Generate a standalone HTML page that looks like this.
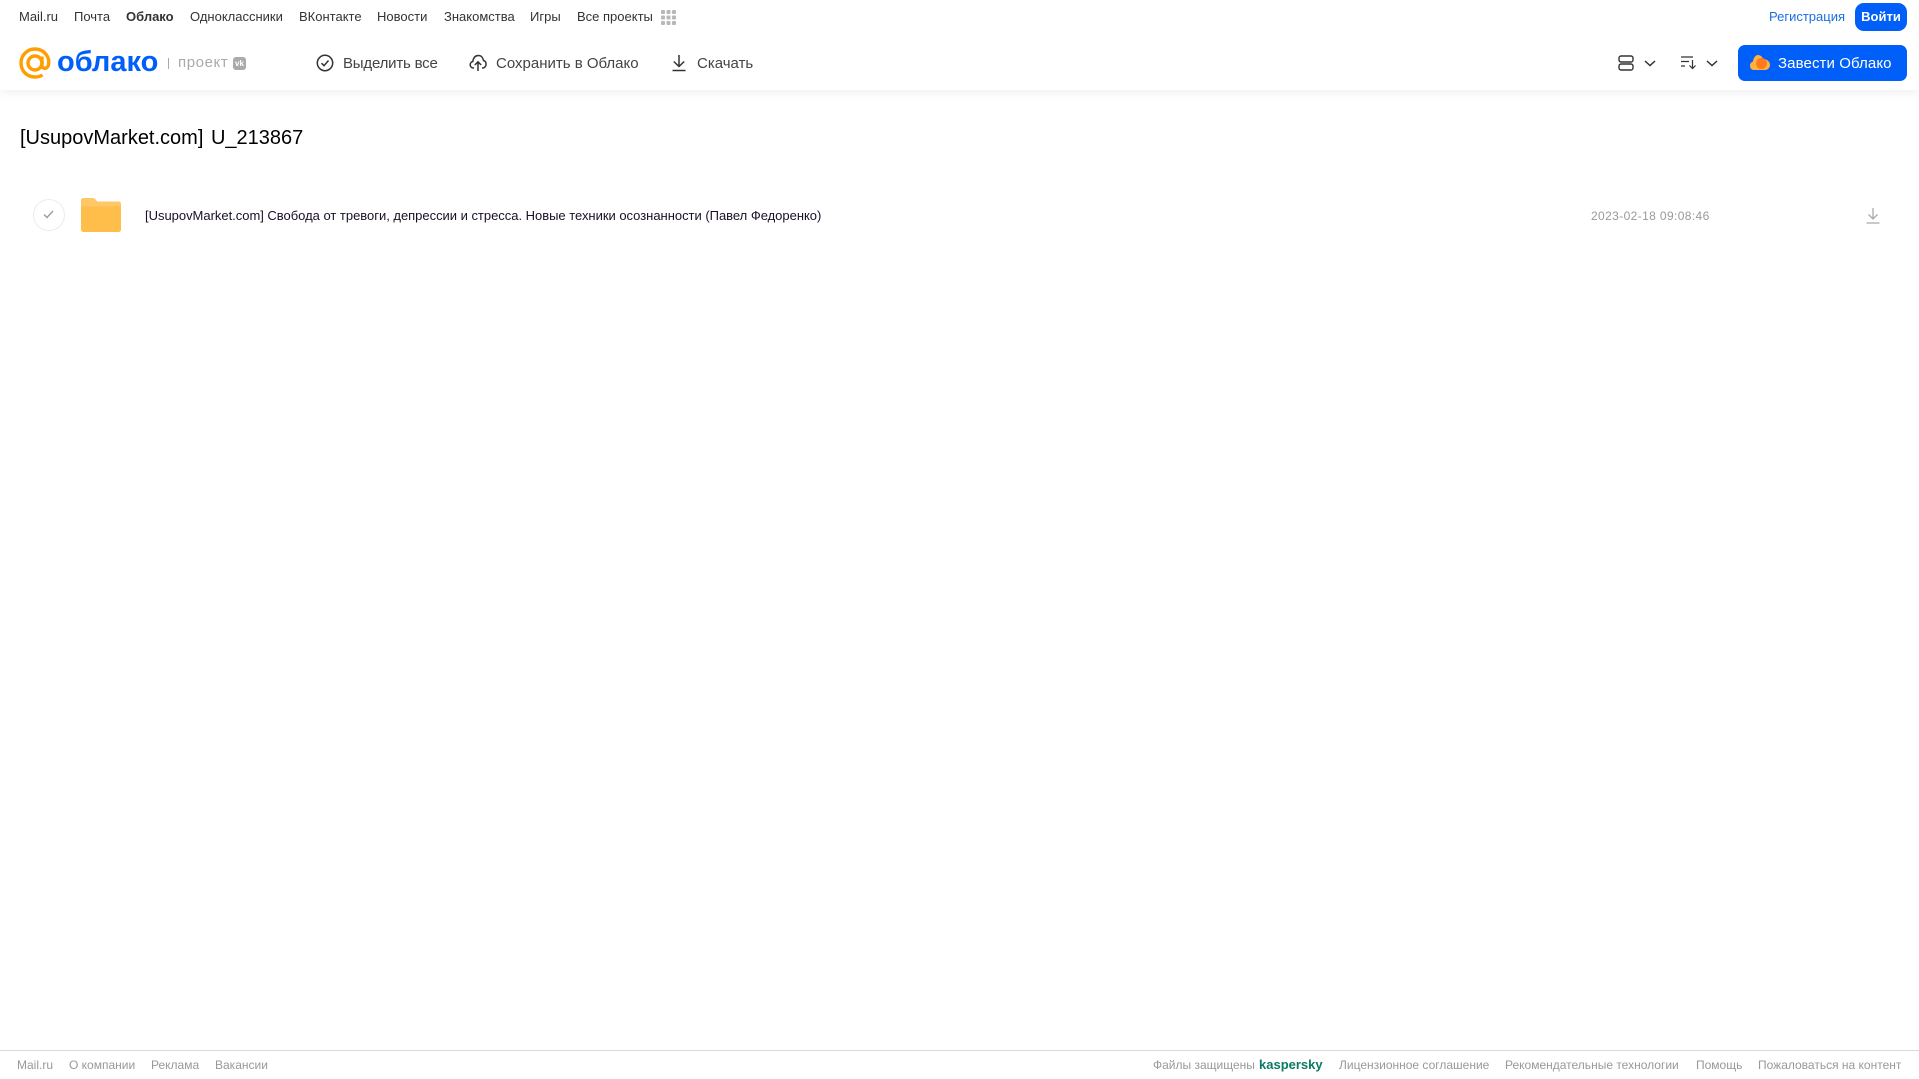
<!DOCTYPE html>
<html lang="ru"><head><meta charset="utf-8"><title>Облако</title>
<style>
html,body{margin:0;padding:0;background:#fff}
body{width:1919px;height:1079px;position:relative;overflow:hidden;font-family:"Liberation Sans",Arial,sans-serif;}
.t{position:absolute;white-space:nowrap;line-height:20px}
.n{top:7px;font-size:13px;color:#333}
.b{top:54px;font-size:15px;color:#444}
.f{top:1055px;font-size:12px;color:#999;line-height:20px}
svg{position:absolute;overflow:visible}
</style></head><body>
<div style="position:absolute;left:0;top:0;width:1919px;height:90px;background:#fff;box-shadow:0 2px 10px rgba(0,0,0,.07)"></div>

<span class="t n" style="left:19px">Mail.ru</span>
<span class="t n" style="left:74px">Почта</span>
<span class="t n" style="left:126px;font-weight:bold">Облако</span>
<span class="t n" style="left:190px">Одноклассники</span>
<span class="t n" style="left:299px">ВКонтакте</span>
<span class="t n" style="left:377px">Новости</span>
<span class="t n" style="left:444px">Знакомства</span>
<span class="t n" style="left:530px">Игры</span>
<span class="t n" style="left:577px">Все проекты</span>
<svg style="left:661px;top:10px" width="15" height="15" fill="#b8b8b8"><rect width="4" height="4" rx="1"/><rect x="5.500" width="4" height="4" rx="1"/><rect x="11" width="4" height="4" rx="1"/><rect y="5.500" width="4" height="4" rx="1"/><rect x="5.500" y="5.500" width="4" height="4" rx="1"/><rect x="11" y="5.500" width="4" height="4" rx="1"/><rect y="11" width="4" height="4" rx="1"/><rect x="5.500" y="11" width="4" height="4" rx="1"/><rect x="11" y="11" width="4" height="4" rx="1"/></svg>

<span class="t" style="left:1769px;top:7px;font-size:13px;color:#1a6fe0">Регистрация</span>
<div class="t" style="left:1855px;top:3px;width:52px;height:28px;line-height:27px;background:#005ff9;border-radius:9px;color:#fff;font-size:13px;font-weight:bold;text-align:center">Войти</div>

<svg style="left:19px;top:47px" width="32" height="32" viewBox="0 0 32 32" fill="none" stroke="#ff9e00" stroke-width="3.400"><circle cx="16" cy="16" r="7"/><path d="M23 9.500V18.500C23 22 28 22.500 29.300 18.500C31.500 10 25 2 16 2C8 2 2 8.500 2 16C2 24 8 30 16 30C19 30 21.500 29.300 23.500 28"/></svg>
<span class="t" style="left:57px;top:47px;font-size:29px;line-height:30px;color:#005ff9;font-weight:bold">облако</span>
<div style="position:absolute;left:168px;top:58px;width:1px;height:11px;background:#aaa"></div>
<span class="t" style="left:178px;top:53px;font-size:15px;color:#aaa;letter-spacing:.6px">проект</span>
<div style="position:absolute;left:233px;top:57px;width:13px;height:13px;background:#aaa;border-radius:3px;color:#fff;font-size:8px;font-weight:bold;line-height:13px;text-align:center">vk</div>

<svg style="left:316px;top:54px" width="18" height="18" fill="none" stroke="#333" stroke-width="1.500"><circle cx="9" cy="9" r="7.700"/><path d="M5.500 9.200L8 11.700L12.500 6.500"/></svg>
<span class="t b" style="left:343px;letter-spacing:-.2px">Выделить все</span>
<svg style="left:469px;top:54px" width="18" height="18" fill="none" stroke="#333" stroke-width="1.500"><path d="M5 14H4.500C0.500 14 0 8.500 3.800 7.500C4.500 3 7 1.500 9.500 1.500C12 1.500 14 3.500 14.500 6.500C18 7.500 18 13 14 14H13"/><path d="M9 17V8M5.800 11L9 7.800L12.200 11"/></svg>
<span class="t b" style="left:496px">Сохранить в Облако</span>
<svg style="left:672px;top:54px" width="14" height="18" fill="none" stroke="#333" stroke-width="1.500"><path d="M7 1V12M1.800 7.500L7 12.500L12.200 7.500M0.500 16.500H13.500"/></svg>
<span class="t b" style="left:697px">Скачать</span>

<svg style="left:1618px;top:55px" width="16" height="16" fill="none" stroke="#333" stroke-width="1.400"><rect x="1" y="1" width="14" height="6" rx="2"/><rect x="1" y="9" width="14" height="6" rx="2"/></svg>
<svg style="left:1644px;top:60px" width="12" height="7" fill="none" stroke="#333" stroke-width="1.500"><path d="M1 1L6 5.500L11 1"/></svg>
<svg style="left:1681px;top:56px" width="16" height="14" fill="none" stroke="#333" stroke-width="1.200"><path d="M0 1H12M0 5.500H8M0 10H4M11.500 4V12.500M8.500 9.500L11.500 12.500L14.500 9.500"/></svg>
<svg style="left:1706px;top:60px" width="12" height="7" fill="none" stroke="#333" stroke-width="1.500"><path d="M1 1L6 5.500L11 1"/></svg>

<div style="position:absolute;left:1738px;top:45px;width:169px;height:36px;background:#005ff9;border-radius:7px"></div>
<svg style="left:1750px;top:54px" width="20" height="17" viewBox="0 0 20 17"><path d="M4 16C1 16 0 13.500 0 11.500C0 9.500 1.500 8 3 7.500C3.500 3 6 1 8 1C10.500 1 12.500 3 13 5C17 5 20 7.500 20 11C20 14 17.500 16 15 16Z" fill="#ffb240"/><circle cx="11.500" cy="9.500" r="5.500" fill="#ff7a1f"/></svg>
<span class="t" style="left:1778px;top:54px;font-size:15px;color:#fff;letter-spacing:.1px">Завести Облако</span>

<span class="t" style="left:20px;top:125px;font-size:20px;line-height:26px;color:#000;word-spacing:2px">[UsupovMarket.com] U_213867</span>

<div style="position:absolute;left:33px;top:199px;width:30px;height:30px;border:1px solid #ececec;border-radius:50%"></div>
<svg style="left:43px;top:210px" width="11" height="9" fill="none" stroke="#999" stroke-width="1.300"><path d="M1 4.500L4 7.500L10 1"/></svg>
<svg style="left:81px;top:198px" width="40" height="34" viewBox="0 0 40 34"><path d="M0 3C0 1 1 0 3 0H11C13 0 14 1 15 2L16 3.500H37C39 3.500 40 4.500 40 6.500V31C40 33 39 34 37 34H3C1 34 0 33 0 31Z" fill="#ffbd4a"/><path d="M0 8.500H40V6.500C40 4.500 39 3.500 37 3.500H16L15 2C14 1 13 0 11 0H3C1 0 0 1 0 3Z" fill="#ffc765"/></svg>
<span class="t" style="left:145px;top:206px;font-size:13px;letter-spacing:-.02px;color:#1a1024">[UsupovMarket.com] Свобода от тревоги, депрессии и стресса. Новые техники осознанности (Павел Федоренко)</span>
<span class="t" style="left:1591px;top:206px;font-size:12px;letter-spacing:.38px;color:#999">2023-02-18 09:08:46</span>
<svg style="left:1866px;top:207px" width="14" height="18" fill="none" stroke="#aaa" stroke-width="1.300"><path d="M7 1V12M2.500 7.500L7 12L11.500 7.500M0.500 16H13.500"/></svg>

<div style="position:absolute;left:0;top:1050px;width:1919px;height:1px;background:#d9d9d9"></div>
<span class="t f" style="left:17px">Mail.ru</span>
<span class="t f" style="left:69px">О компании</span>
<span class="t f" style="left:151px">Реклама</span>
<span class="t f" style="left:215px">Вакансии</span>
<span class="t f" style="left:1153px">Файлы защищены</span>
<span class="t f" style="left:1259px;color:#0a7a65;font-weight:bold;font-size:13px">kaspersky</span>
<span class="t f" style="left:1339px">Лицензионное соглашение</span>
<span class="t f" style="left:1505px">Рекомендательные технологии</span>
<span class="t f" style="left:1696px">Помощь</span>
<span class="t f" style="left:1758px">Пожаловаться на контент</span>
</body></html>
